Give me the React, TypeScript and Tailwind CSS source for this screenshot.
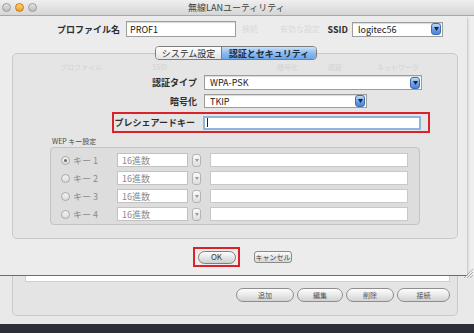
import React from 'react';

const BlueArrow = () => (
  <span className="flex h-[12px] w-[10px] shrink-0 items-center justify-center rounded-[3px] border border-[#3b6db5] bg-gradient-to-b from-[#c4dcf7] via-[#73a4e4] to-[#4a84d6]">
    <svg width="5" height="4" viewBox="0 0 5 4">
      <path d="M0 0h5L2.5 4z" fill="#13243f" />
    </svg>
  </span>
);

const GrayArrow = () => (
  <span className="ml-[4px] flex h-[13px] w-[9px] shrink-0 items-center justify-center rounded-[3px] border border-[#b4b4b4] bg-gradient-to-b from-[#fafafa] to-[#dedede]">
    <svg width="4" height="3" viewBox="0 0 4 3">
      <path d="M0 0h4L2 3z" fill="#9a9a9a" />
    </svg>
  </span>
);

const Select = ({ value, width, height = 'h-[15px]' }: { value: string; width: string; height?: string }) => (
  <div className={`flex ${width} ${height} items-center justify-between border border-[#9d9d9d] bg-white pl-[5px] pr-[1px] shadow-[inset_0_1px_1px_rgba(0,0,0,0.15)]`}>
    <span className="text-[9px] leading-none text-[#1a1a1a]">{value}</span>
    <BlueArrow />
  </div>
);

const Label = ({ children, width }: { children: React.ReactNode; width: string }) => (
  <span className={`${width} shrink-0 text-right text-[9px] font-bold leading-none text-[#2e2e2e]`}>{children}</span>
);

const WepRow = ({ n, selected }: { n: number; selected?: boolean }) => (
  <div className="flex h-[14px] items-center">
    <span className="ml-[10px] flex h-[9px] w-[9px] items-center justify-center rounded-full border border-[#a8a8a8] bg-gradient-to-b from-[#f4f4f4] to-[#dcdcdc]">
      {selected && <span className="h-[3px] w-[3px] rounded-full bg-[#6a6a6a]" />}
    </span>
    <span className="ml-[3px] w-[44px] text-[9px] leading-none text-[#8c8c8c]">キー {n}</span>
    <div className="flex h-[14px] w-[71px] items-center border border-[#c2c2c2] bg-white pl-[4px]">
      <span className="text-[9px] leading-none text-[#8a8a8a]">16進数</span>
    </div>
    <GrayArrow />
    <div className="ml-[9px] h-[14px] w-[198px] border border-[#c8c8c8] bg-white" />
  </div>
);

const SmallButton = ({ label, width }: { label: string; width: string }) => (
  <div className={`flex ${width} h-[14px] items-center justify-center rounded-full border border-[#8e8e8e] bg-gradient-to-b from-[#fdfdfd] via-[#e9e9e9] to-[#d2d2d2] text-[7px] leading-none text-[#555]`}>
    {label}
  </div>
);

export default function App() {
  return (
    <div className="relative h-[333px] w-[474px] overflow-hidden bg-[#efefef] font-['Noto_Sans_CJK_JP','Noto_Sans',sans-serif]">
      {/* title bar */}
      <div className="relative flex h-[16px] items-center border-b border-[#a8a8a8] bg-gradient-to-b from-[#efefef] to-[#d6d6d6]">
        <div className="ml-[2px] flex gap-[4px]">
          <span className="h-[9px] w-[9px] rounded-full border border-[#9c9c9c] bg-gradient-to-b from-[#e4e4e4] to-[#bdbdbd]" />
          <span className="h-[9px] w-[9px] rounded-full border border-[#c57a12] bg-gradient-to-b from-[#ffd27a] to-[#f39a1c]" />
          <span className="h-[9px] w-[9px] rounded-full border border-[#9c9c9c] bg-gradient-to-b from-[#e4e4e4] to-[#bdbdbd]" />
        </div>
        <span className="absolute left-[188px] top-[3px] text-[9px] leading-none text-[#3e3e3e]">無線LANユーティリティ</span>
      </div>

      {/* sheet */}
      <div className="flex h-[260px] w-[467px] flex-col border-b border-[#6c6c6c] bg-[#ececec] shadow-[0_2px_3px_rgba(0,0,0,0.35)]">
        {/* profile name row */}
        <div className="mt-[5px] flex h-[16px] items-center">
          <Label width="w-[120px]">プロファイル名</Label>
          <div className="ml-[6px] flex h-[16px] w-[110px] items-center border border-[#9d9d9d] bg-white pl-[3px] shadow-[inset_0_1px_1px_rgba(0,0,0,0.15)]">
            <span className="text-[9px] leading-none text-[#1a1a1a]">PROF1</span>
          </div>
          <div className="flex w-[91px] items-center text-[8px] leading-none text-[#d9d9d9]">
            <span className="ml-[6px]">接続</span>
            <span className="ml-[22px]">有効な設定</span>
          </div>
          <Label width="w-[21px]">SSID</Label>
          <div className="ml-[4px]">
            <Select value="logitec56" width="w-[91px]" />
          </div>
        </div>

        {/* tabs */}
        <div className="relative z-10 ml-[155px] mt-[9px] flex h-[14px] w-[162px] overflow-hidden rounded-[4px] border border-[#7d7d7d] text-[9px] leading-none">
          <div className="flex w-[66px] items-center justify-center border-r border-[#7d7d7d] bg-gradient-to-b from-white to-[#e4e4e4] text-[#2a2a2a]">
            システム設定
          </div>
          <div className="flex flex-1 items-center justify-center bg-gradient-to-b from-[#c8e0fa] via-[#8dbcef] to-[#6aa5e8] font-bold text-[#1c2c44]">
            認証とセキュリティ
          </div>
        </div>

        {/* group box */}
        <div className="-mt-[7px] ml-[12px] flex h-[186px] w-[446px] flex-col rounded-[5px] border border-[#c9c9c9] bg-[#e5e5e5]">
          <div className="mt-[8px] flex h-[10px] items-center text-[7px] leading-none text-[#d2d2d2]">
            <span className="ml-[47px]">プロファイル</span>
            <span className="ml-[50px]">SSID</span>
            <span className="ml-[110px]">暗号化</span>
            <span className="ml-[30px]">認証</span>
            <span className="ml-[35px]">ネットワーク</span>
          </div>

          <div className="mt-[3px] flex h-[15px] items-center">
            <Label width="w-[184px]">認証タイプ</Label>
            <div className="ml-[7px]">
              <Select value="WPA-PSK" width="w-[218px]" />
            </div>
          </div>

          <div className="mt-[4px] flex h-[14px] items-center">
            <Label width="w-[184px]">暗号化</Label>
            <div className="ml-[7px]">
              <Select value="TKIP" width="w-[163px]" height="h-[14px]" />
            </div>
          </div>

          <div className="ml-[99px] mt-[4px] flex h-[21px] w-[318px] items-center border-2 border-[#d8232a]">
            <Label width="w-[81px]">プレシェアードキー</Label>
            <div className="ml-[8px] flex h-[14px] w-[218px] items-center border-2 border-[#8fb4dd] bg-white pl-[2px]">
              <span className="h-[9px] w-px bg-[#222]" />
            </div>
          </div>

          <div className="ml-[39px] mt-[3px] flex h-[10px] items-center text-[7px] leading-none text-[#4a4a4a]">
            WEP キー設定
          </div>

          <div className="ml-[37px] mt-[1px] flex h-[78px] w-[370px] flex-col gap-[4px] rounded-[4px] border border-[#c3c3c3] bg-[#dddddd] pt-[5px]">
            <WepRow n={1} selected />
            <WepRow n={2} />
            <WepRow n={3} />
            <WepRow n={4} />
          </div>
        </div>

        {/* buttons */}
        <div className="mt-[8px] flex items-center">
          <div className="ml-[193px] flex h-[20px] w-[47px] items-center justify-center border-2 border-[#d8232a]">
            <div className="flex h-[13px] w-[38px] items-center justify-center rounded-full border border-[#7f7f7f] bg-gradient-to-b from-[#fdfdfd] via-[#e6e6e6] to-[#cfcfcf] text-[8px] leading-none text-[#333]">
              OK
            </div>
          </div>
          <div className="ml-[14px] flex h-[12px] w-[38px] items-center justify-center rounded-[3px] border border-[#8a8a8a] bg-gradient-to-b from-[#fafafa] to-[#d8d8d8] text-[7px] leading-none text-[#444]">
            キャンセル
          </div>
        </div>
      </div>

      {/* resize grip */}
      <svg className="absolute left-[463px] top-[268px]" width="10" height="10" viewBox="0 0 10 10">
        <path d="M10 1L1 10M10 4L4 10M10 7L7 10" stroke="#9a9a9a" strokeWidth="0.8" />
      </svg>

      {/* main window behind */}
      <div className="flex h-[48px] flex-col bg-[#e9e9e9]">
        <div className="ml-[12px] flex h-[40px] w-[446px] flex-col rounded-b-[5px] border-x border-b border-[#c9c9c9] bg-[#e4e4e4]">
          <div className="ml-[12px] h-[6px] w-[425px] border-x border-b border-[#cfcfcf] bg-white" />
          <div className="mt-[6px] flex justify-end gap-[3px] pr-[7px]">
            <SmallButton label="追加" width="w-[58px]" />
            <SmallButton label="編集" width="w-[46px]" />
            <SmallButton label="削除" width="w-[48px]" />
            <SmallButton label="接続" width="w-[53px]" />
          </div>
        </div>
      </div>
      <div className="h-[9px] bg-[#2c2f37]" />
    </div>
  );
}
